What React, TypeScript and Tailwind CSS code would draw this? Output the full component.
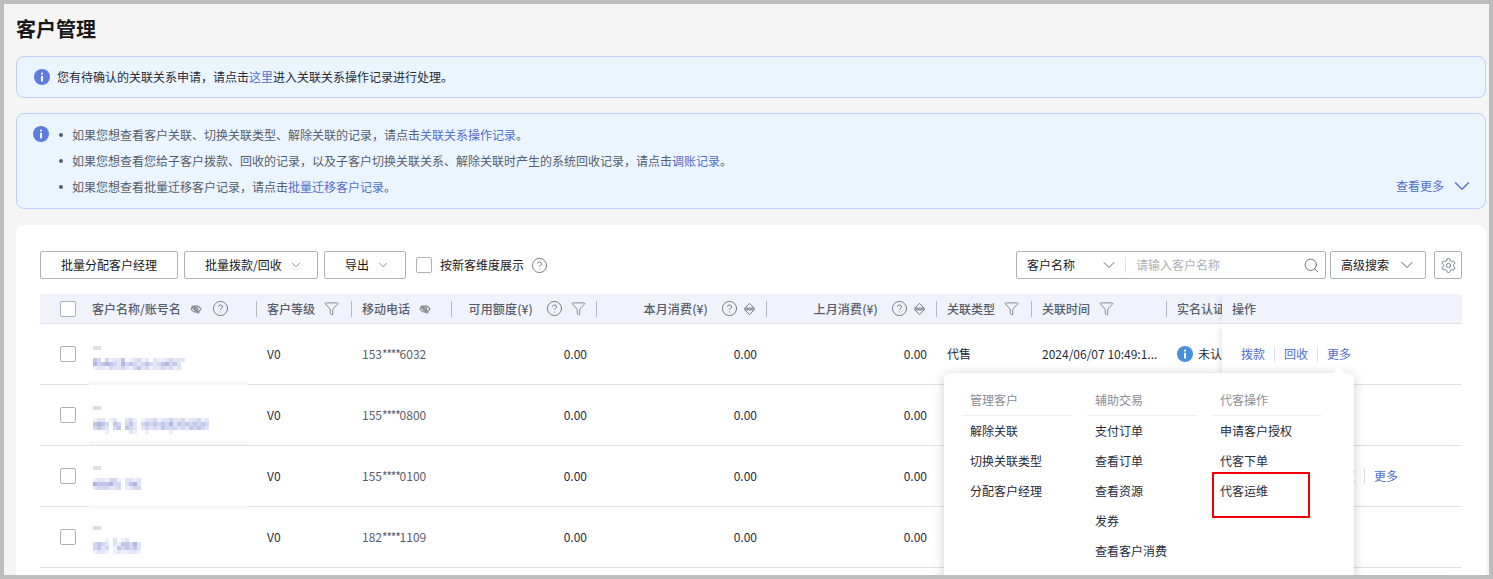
import { ChevronDown, CircleHelp, Funnel, Search, Settings } from "lucide-react";

const FONT = "font-['Noto_Sans_CJK_SC','Noto_Sans',sans-serif]";
const COLS =
  "grid grid-cols-[216px_95px_100px_145px_170px_170px_95px_135px_56px_240px]";

const shades: Record<string, string> = {
  ".": "bg-white",
  a: "bg-[#eef0fa]",
  b: "bg-[#e2e5f5]",
  c: "bg-[#d3d7ef]",
  d: "bg-[#c1c6e8]",
  e: "bg-[#b0b6e2]",
  f: "bg-[#dbe6f4]",
};

const customers = [
  {
    phone: "153****6032",
    top: "mt-[22px]",
    patch: "-bottom-px",
    mosaic: [
      "dc.cabbd.abcab.baabcbbf",
      "ecdedcbecdcbcdcbcdecdf",
      "abbacbbcbacdbcabbcbcaf",
    ],
    ops: false,
  },
  {
    phone: "155****0800",
    top: "mt-[21px]",
    patch: "bottom-0",
    mosaic: [
      "abb.ab..bca.abbcabbcbbcabbcab",
      "dedc.dc.cdb.cdcdcdcebdcdcdcdc",
      "cdcb.cd.dcb.bcbcbdcccbcbdcdcb",
      "...a.....ba..a.....a.........",
    ],
    ops: false,
  },
  {
    phone: "155****0100",
    top: "mt-[20px]",
    patch: "-bottom-[3px]",
    mosaic: ["abbacca.bbaf", "edddecc.fdef", "bcccbbc.abcc"],
    ops: true,
  },
  {
    phone: "182****1109",
    top: "mt-[19px]",
    patch: "",
    mosaic: ["...a.f.ab...", "cdcb.faddcef", "cdbc.adcdcdf", "abba.abaabba"],
    ops: false,
  },
];

const menu = [
  { title: "管理客户", items: ["解除关联", "切换关联类型", "分配客户经理"] },
  { title: "辅助交易", items: ["支付订单", "查看订单", "查看资源", "发券", "查看客户消费"] },
  { title: "代客操作", items: ["申请客户授权", "代客下单", "代客运维"] },
];

const InfoDot = ({ color, className }: { color: string; className: string }) => (
  <svg viewBox="0 0 16 16" className={className}>
    <circle cx="8" cy="8" r="8" fill={color} />
    <circle cx="8" cy="4.6" r="1.1" fill="#fff" />
    <rect x="7" y="6.8" width="2" height="5.8" rx="0.5" fill="#fff" />
  </svg>
);

const EyeOff = () => (
  <svg viewBox="0 0 12 12" className="h-3 w-3 text-[#8a8e99]" fill="none" stroke="currentColor" strokeWidth="1.2">
    <path d="M1 6c1.4-2.2 3-3.2 5-3.2S9.600 3.800 11 6c-1.400 2.200-3 3.200-5 3.200S2.400 8.200 1 6z" />
    <circle cx="6" cy="6" r="1.700" />
    <path d="M2.500 2.500l7 7M1.500 3.500l7 7" />
  </svg>
);

const Sort = () => (
  <svg viewBox="0 0 12 14" className="h-[14px] w-[11px]">
    <path d="M6 0.800l5.200 5.400h-10.400z" fill="none" stroke="#6c6f78" strokeWidth="1" />
    <path d="M6 13.200l5.200-5.400h-10.400z" fill="none" stroke="#6c6f78" strokeWidth="1" />
    <rect x="0.500" y="5.600" width="11" height="2.800" fill="#9a9da6" />
  </svg>
);

const Help = () => <CircleHelp size={17} strokeWidth={1.100} className="text-[#575d6c]" />;
const Filter = () => <Funnel size={15} strokeWidth={1.100} className="text-[#575d6c]" />;

const Checkbox = () => (
  <span className="block h-4 w-4 shrink-0 rounded-[2px] border border-[#adb0b8] bg-white" />
);

const Button = ({ label, className }: { label: string; className: string }) => (
  <button className={`flex h-7 items-center justify-center rounded-[2px] border border-[#adb0b8] bg-white text-xs text-[#191919] ${className}`}>
    {label}
  </button>
);

const ArrowButton = ({ label, className, size = 14, gap }: { label: string; className: string; size?: number; gap: string }) => (
  <button className={`flex h-7 items-center rounded-[2px] border border-[#adb0b8] bg-white text-xs text-[#191919] ${className}`}>
    {label}
    <span className={gap}>
      <ChevronDown size={size} strokeWidth={1.200} className="text-[#575d6c]" />
    </span>
  </button>
);

const HeadCell = ({ children, right }: { children: React.ReactNode; right?: boolean }) => (
  <div className="flex items-center">
    <div className={`flex h-4 w-full items-center border-l border-[#b6b8c0] ${right ? "justify-end" : "pl-[10px]"}`}>
      {children}
    </div>
  </div>
);

const Mosaic = ({ rows }: { rows: string[] }) => (
  <div className="flex flex-col">
    {rows.map((row, i) => (
      <div key={i} className="flex">
        {row.split("").map((s, j) => (
          <span key={j} className={`h-1 w-1 ${shades[s]}`} />
        ))}
      </div>
    ))}
  </div>
);

const Op = ({ label, className = "" }: { label: string; className?: string }) => (
  <a className={`text-xs text-[#526ecc] ${className}`}>{label}</a>
);
const OpLine = () => <span className="mx-[9px] h-4 w-px bg-[#dfe1e6]" />;

const App = () => {
  return (
    <div className={`h-[579px] w-[1493px] overflow-hidden bg-[#bdbdbd] p-1 ${FONT}`}>
      <div className="relative h-full overflow-hidden bg-[#f5f5f5] pl-3 pr-[3px] pt-3">
        <h1 className="h-[26px] text-[20px] font-bold leading-[26px] text-[#191919]">客户管理</h1>

        <div className="mt-[14px] flex h-[42px] items-center rounded-lg border border-[#bfd0ff] bg-[#eaf5ff] pl-[17px] text-xs text-[#252b3a]">
          <InfoDot color="#5e7ce0" className="h-4 w-4" />
          <p className="ml-[7px]">
            您有待确认的关联关系申请，请点击<a className="text-[#526ecc]">这里</a>进入关联关系操作记录进行处理。
          </p>
        </div>

        <div className="relative mt-[15px] flex h-[96px] rounded-lg border border-[#bfd0ff] bg-[#eaf5ff] pl-4 pt-3 text-xs text-[#575d6c]">
          <InfoDot color="#5e7ce0" className="h-4 w-4" />
          <ul className="-mt-1 ml-[10px] flex flex-col text-[12px]">
            <li className="flex h-[26px] items-center gap-[9px]">
              <span className="h-1 w-1 rounded-full bg-[#575d6c]" />
              <span>如果您想查看客户关联、切换关联类型、解除关联的记录，请点击<a className="text-[#526ecc]">关联关系操作记录</a>。</span>
            </li>
            <li className="flex h-[26px] items-center gap-[9px]">
              <span className="h-1 w-1 rounded-full bg-[#575d6c]" />
              <span>如果您想查看您给子客户拨款、回收的记录，以及子客户切换关联关系、解除关联时产生的系统回收记录，请点击<a className="text-[#526ecc]">调账记录</a>。</span>
            </li>
            <li className="flex h-[26px] items-center gap-[9px]">
              <span className="h-1 w-1 rounded-full bg-[#575d6c]" />
              <span>如果您想查看批量迁移客户记录，请点击<a className="text-[#526ecc]">批量迁移客户记录</a>。</span>
            </li>
          </ul>
          <a className="ml-auto mr-[10px] mt-[47px] flex h-[26px] items-center gap-[5px] self-start text-[#526ecc]">
            查看更多
            <ChevronDown size={26} strokeWidth={1.200} />
          </a>
        </div>

        <div className="mt-4 h-[360px] rounded-t-lg bg-white px-6 pt-[26px]">
          <div className="flex items-center">
            <Button label="批量分配客户经理" className="w-[138px]" />
            <ArrowButton label="批量拨款/回收" gap="ml-[7px]" className="ml-[6px] w-[134px] pl-5" />
            <ArrowButton label="导出" gap="ml-[7px]" className="ml-[6px] w-[82px] pl-5" />
            <span className="ml-[10px]"><Checkbox /></span>
            <span className="ml-2 text-xs text-[#191919]">按新客维度展示</span>
            <span className="ml-[7px]"><Help /></span>
            <div className="ml-auto flex h-7 w-[310px] items-center rounded-[2px] border border-[#adb0b8] text-xs">
              <span className="ml-[10px] text-[#191919]">客户名称</span>
              <ChevronDown size={20} strokeWidth={1.100} className="ml-6 text-[#575d6c]" />
              <span className="ml-[6px] h-4 w-px bg-[#dfe1e6]" />
              <span className="ml-[10px] text-[#adb0b8]">请输入客户名称</span>
              <Search size={17} strokeWidth={1.200} className="ml-auto mr-[5px] text-[#575d6c]" />
            </div>
            <ArrowButton label="高级搜索" size={20} gap="ml-2" className="ml-1 w-[96px] pl-[10px]" />
            <button className="ml-2 flex h-7 w-7 items-center justify-center rounded-[2px] border border-[#adb0b8]">
              <Settings size={17} strokeWidth={1.100} className="text-[#575d6c]" />
            </button>
          </div>

          <div className={`mt-[15px] h-[30px] border-b border-[#dfe1e6] bg-[#f0f3fb] text-xs font-medium text-[#575d6c] ${COLS}`}>
            <div className="flex items-center pl-5">
              <Checkbox />
              <span className="ml-4">客户名称/账号名</span>
              <span className="ml-[9px]"><EyeOff /></span>
              <span className="ml-[10px]"><Help /></span>
            </div>
            <HeadCell>
              客户等级<span className="ml-[9px]"><Filter /></span>
            </HeadCell>
            <HeadCell>
              移动电话<span className="ml-[9px]"><EyeOff /></span>
            </HeadCell>
            <HeadCell right>
              <span className="tracking-[0.15px]">可用额度(¥)</span>
              <span className="ml-[13px]"><Help /></span>
              <span className="ml-2 mr-[10px]"><Filter /></span>
            </HeadCell>
            <HeadCell right>
              <span className="tracking-[0.15px]">本月消费(¥)</span>
              <span className="ml-[13px]"><Help /></span>
              <span className="ml-[6px] mr-[11px]"><Sort /></span>
            </HeadCell>
            <HeadCell right>
              <span className="tracking-[0.15px]">上月消费(¥)</span>
              <span className="ml-[13px]"><Help /></span>
              <span className="ml-[6px] mr-[11px]"><Sort /></span>
            </HeadCell>
            <HeadCell>
              关联类型<span className="ml-[9px]"><Filter /></span>
            </HeadCell>
            <HeadCell>
              关联时间<span className="ml-[9px]"><Filter /></span>
            </HeadCell>
            <HeadCell>
              <span className="whitespace-nowrap">实名认证</span>
            </HeadCell>
            <div className="relative flex items-center bg-[#f0f3fb] pl-[10px] shadow-[-6px_0_6px_-4px_rgba(0,0,0,0.1)]">操作</div>
          </div>

          {customers.map((c) => (
            <div key={c.phone} className={`relative h-[61px] border-b border-[#dfe1e6] text-xs text-[#252b3a] ${COLS}`}>
              <div className="flex items-start pl-5">
                <span className="mt-[22px]"><Checkbox /></span>
                <div className={`ml-[17px] flex flex-col items-start gap-2 ${c.top}`}>
                  <span className="block h-1 w-2 bg-[#dcdee4]" />
                  <Mosaic rows={c.mosaic} />
                </div>
              </div>
              {c.patch && <span className={`absolute left-[49px] h-1 w-[159px] bg-[#f7f7f7] ${c.patch}`} />}
              <div className="flex items-center pl-[11px]">V0</div>
              <div className="flex items-center pl-[11px] text-[#575d6c]">
                {c.phone.slice(0, 3)}
                <span className="tracking-[-1.200px]">****</span>
                {c.phone.slice(7)}
              </div>
              <div className="flex items-center justify-end pr-[9px]">0.00</div>
              <div className="flex items-center justify-end pr-[9px]">0.00</div>
              <div className="flex items-center justify-end pr-[9px]">0.00</div>
              <div className="flex items-center pl-[11px]">代售</div>
              <div className="flex items-center whitespace-nowrap pl-[11px]">2024/06/07 10:49:1...</div>
              <div className="flex items-center overflow-hidden pl-[11px]">
                <InfoDot color="#4a90d9" className="h-4 w-4 shrink-0" />
                <span className="ml-[5px] whitespace-nowrap">未认证</span>
              </div>
              <div className="relative flex items-center bg-white pl-[19px] shadow-[-6px_0_6px_-4px_rgba(0,0,0,0.1)]">
                <Op label="拨款" />
                <OpLine />
                <Op label="回收" />
                <OpLine />
                {c.ops && (
                  <>
                    <Op label="授权" className="pl-1" />
                    <OpLine />
                  </>
                )}
                <Op label="更多" />
              </div>
            </div>
          ))}
        </div>

        <div className="absolute left-[940px] top-[369px] h-[230px] w-[410px] rounded-t-md bg-white pl-[18px] pt-[17px] shadow-[0_2px_12px_rgba(0,0,0,0.2)]">
          <span className="absolute right-[10px] top-[-4px] h-[10px] w-[10px] rotate-45 bg-white" />
          <div className="flex gap-[15px]">
            {menu.map((group) => (
              <div key={group.title} className="w-[110px] text-xs">
                <div className="h-[26px] border-b border-[#eeeff0] pl-2 leading-5 text-[#8a8e99]">{group.title}</div>
                <ul className="mt-[5px] flex flex-col gap-[10px] pl-2 text-[#252b3a]">
                  {group.items.map((item) => (
                    <li key={item} className="h-5 whitespace-nowrap leading-5">{item}</li>
                  ))}
                </ul>
              </div>
            ))}
          </div>
        </div>

        <div className="absolute left-[1208px] top-[468px] h-[46px] w-[98px] border-2 border-[#f00000]" />
      </div>
    </div>
  );
};

export default App;
